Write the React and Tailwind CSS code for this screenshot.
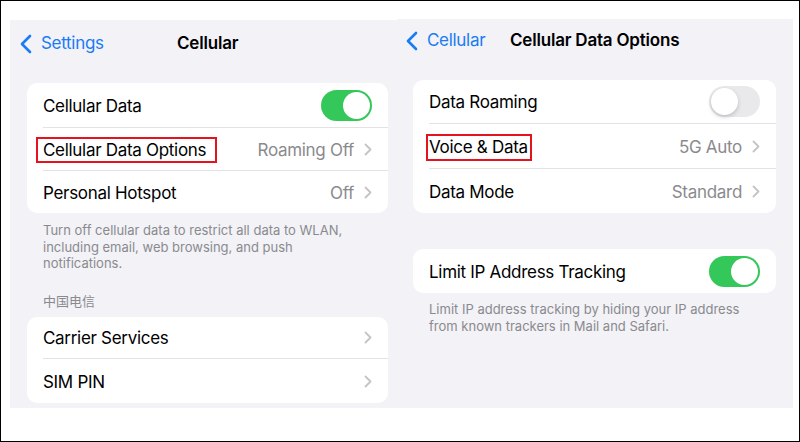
import React from 'react';

const font = { fontFamily: 'Inter, "Noto Sans CJK SC", sans-serif' };

function BackChevron() {
  return (
    <svg width="12" height="20" viewBox="0 0 12 20" className="shrink-0">
      <path d="M10 2 L2 10 L10 18" stroke="#1a7cf5" strokeWidth="2.6" fill="none" strokeLinecap="round" strokeLinejoin="round" />
    </svg>
  );
}

function Chevron() {
  return (
    <svg width="8" height="13" viewBox="0 0 8 13" className="shrink-0">
      <path d="M1.5 1.5 L6.5 6.5 L1.5 11.5" stroke="#c4c4c7" strokeWidth="1.8" fill="none" strokeLinecap="round" strokeLinejoin="round" />
    </svg>
  );
}

function Toggle({ on }) {
  return on ? (
    <div className="w-[51px] h-[31px] rounded-full bg-[#34c759] flex items-center justify-end p-[2px] shrink-0">
      <div className="w-[27px] h-[27px] rounded-full bg-white" />
    </div>
  ) : (
    <div className="w-[51px] h-[31px] rounded-full bg-[#e9e9eb] flex items-center justify-start p-[2px] shrink-0">
      <div className="w-[27px] h-[27px] rounded-full bg-white shadow-[0_2px_4px_rgba(0,0,0,0.18)]" />
    </div>
  );
}

function Row({ label, value, chevron, toggle, box, h = 'h-[44px]', last }) {
  return (
    <div className={`pl-4 ${h}`}>
      <div className={`h-full flex items-center pr-4 ${last ? '' : 'border-b border-[#e3e3e7]'}`}>
        <span className="relative mt-[1px] text-[17px] leading-[22px] tracking-[-0.3px] text-black">
          {label}
          {box && <span className={`absolute border-2 border-[#e3141e] ${box}`} />}
        </span>
        <div className="flex-1" />
        {value && (
          <span className="mt-[1px] text-[17px] leading-[22px] tracking-[-0.3px] text-[#8a8a8e] mr-[10px]">{value}</span>
        )}
        {chevron && <Chevron />}
        {toggle !== undefined && <Toggle on={toggle} />}
      </div>
    </div>
  );
}

function Card({ children, className = '' }) {
  return <div className={`bg-white rounded-[10px] overflow-hidden ${className}`}>{children}</div>;
}

function Footer({ children, className = '' }) {
  return <p className={`text-[13px] leading-[16.5px] text-[#8a8a8e] pl-4 ${className}`}>{children}</p>;
}

export default function App() {
  return (
    <div className="w-[800px] h-[442px] border border-black bg-white overflow-hidden" style={font}>
      <div className="flex pl-[9px] pt-[19px]">
        {/* Cellular screen */}
        <div className="w-[387px] h-[388px] bg-[#f2f2f7] pl-[17px] pr-[9px]">
          <div className="h-[45px] flex items-center -ml-[7px] pt-[2px]">
            <div className="w-[157px] flex items-center gap-[9px]">
              <BackChevron />
              <span className="text-[17px] tracking-[-0.3px] text-[#1a7cf5]">Settings</span>
            </div>
            <span className="text-[17px] font-semibold tracking-[-0.2px] text-black">Cellular</span>
          </div>
          <Card className="mt-[18px]">
            <Row label="Cellular Data" toggle={true} h="h-[45px]" />
            <Row label="Cellular Data Options" value="Roaming Off" chevron box="-left-[7px] -right-[11px] -top-[2px] -bottom-[2px]" h="h-[43px]" />
            <Row label="Personal Hotspot" value="Off" chevron h="h-[42px]" last />
          </Card>
          <Footer className="mt-[9px] pr-4">
            Turn off cellular data to restrict all data to WLAN, including email, web browsing, and push notifications.
          </Footer>
          <Footer className="mt-[21px]">中国电信</Footer>
          <Card className="mt-[8px]">
            <Row label="Carrier Services" chevron h="h-[42px]" />
            <Row label="SIM PIN" chevron h="h-[44px]" last />
          </Card>
        </div>

        {/* Cellular Data Options screen */}
        <div className="w-[396px] h-[389px] -mt-[1px] bg-[#f2f2f7] pl-[16px] pr-[17px]">
          <div className="h-[42px] flex items-center -ml-[7px] pt-[1px]">
            <div className="w-[104px] flex items-center gap-[9px]">
              <BackChevron />
              <span className="text-[17px] tracking-[-0.3px] text-[#1a7cf5]">Cellular</span>
            </div>
            <span className="text-[17px] font-semibold tracking-[-0.2px] text-black">Cellular Data Options</span>
          </div>
          <Card className="mt-[19px]">
            <Row label="Data Roaming" toggle={false} h="h-[44px]" />
            <Row label="Voice & Data" value="5G Auto" chevron box="-left-[3px] -right-[4px] -top-[2px] -bottom-[3px]" h="h-[45px]" />
            <Row label="Data Mode" value="Standard" chevron h="h-[44px]" last />
          </Card>
          <Card className="mt-[36px]">
            <Row label="Limit IP Address Tracking" toggle={true} h="h-[44px]" last />
          </Card>
          <Footer className="mt-[8px] pr-4">
            Limit IP address tracking by hiding your IP address from known trackers in Mail and Safari.
          </Footer>
        </div>
      </div>
    </div>
  );
}
